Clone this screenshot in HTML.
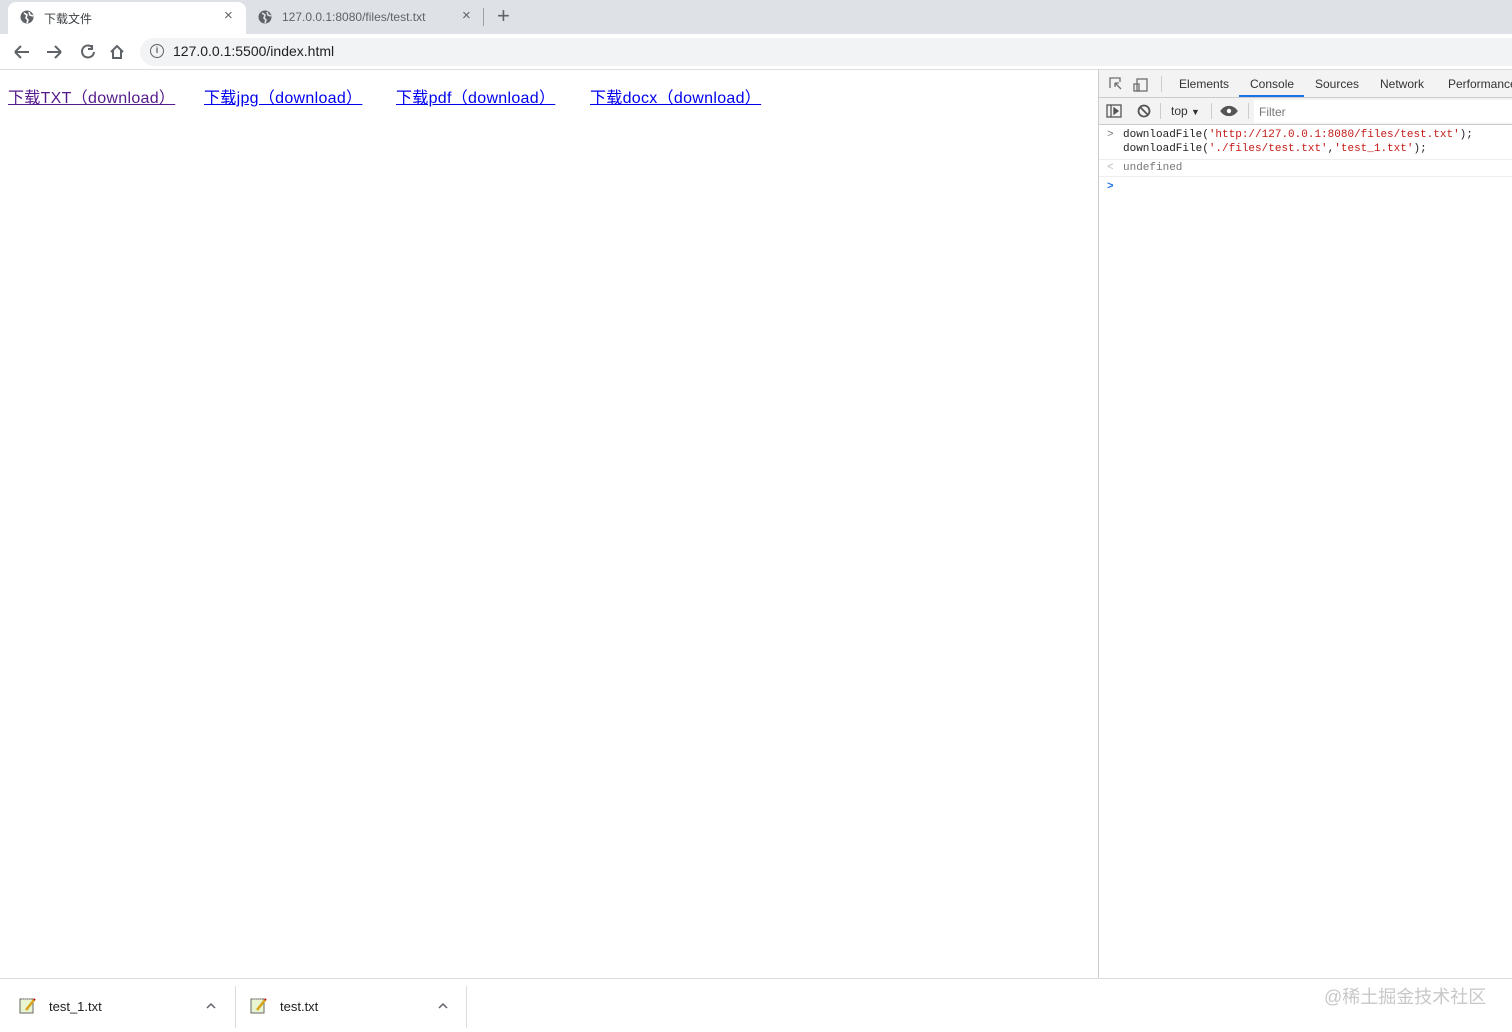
<!DOCTYPE html><html><head><meta charset="utf-8"><style>
*{margin:0;padding:0;box-sizing:border-box}
body{width:1512px;height:1032px;position:relative;overflow:hidden;background:#fff;font-family:"Liberation Sans","Noto Sans CJK SC",sans-serif}
.a{position:absolute}
.mono{font-family:"Liberation Mono",monospace;font-size:11px;line-height:14px}
.lk{font-size:16px;text-decoration:underline;letter-spacing:0.3px;top:84px}
</style></head><body>
<div class="a" style="left:0;top:0;width:1512px;height:34px;background:#dee1e6"></div>
<div class="a" style="left:8px;top:2px;width:238px;height:32px;background:#fff;border-radius:8px 8px 0 0"></div>
<svg class="a" style="left:20px;top:10px" width="14" height="14" viewBox="0 0 14 14"><circle cx="7" cy="7" r="6.5" fill="#5f6368"/><path d="M4 3l3 2-1 3 2 2-1 3M9 2l1 3 3 1" stroke="#fff" stroke-width="1.6" fill="none"/></svg>
<div class="a" style="left:44px;top:10px;font-size:12px;color:#3c4043">下载文件</div>
<div class="a" style="left:224px;top:7px;font-size:15px;color:#5f6368">×</div>
<svg class="a" style="left:258px;top:10px" width="14" height="14" viewBox="0 0 14 14"><circle cx="7" cy="7" r="6.5" fill="#5f6368"/><path d="M4 3l3 2-1 3 2 2-1 3M9 2l1 3 3 1" stroke="#dee1e6" stroke-width="1.6" fill="none"/></svg>
<div class="a" style="left:282px;top:10px;font-size:12px;color:#5f6368">127.0.0.1:8080/files/test.txt</div>
<div class="a" style="left:462px;top:7px;font-size:15px;color:#5f6368">×</div>
<div class="a" style="left:483px;top:8px;width:1px;height:18px;background:#9aa0a6"></div>
<div class="a" style="left:497px;top:3px;font-size:22px;color:#5f6368">+</div>
<svg class="a" style="left:12px;top:42px" width="120" height="20" viewBox="0 0 120 20" fill="none" stroke="#5f6368" stroke-width="2"><path d="M3 10h14M3 10l6-6M3 10l6 6"/><path d="M35 10h14M49 10l-6-6M49 10l-6 6"/><path d="M80 5a6 6 0 1 0 2 5M80 3v4h-4"/><path d="M99 10l6-6 6 6M101 8v8h8V8"/></svg>
<div class="a" style="left:140px;top:38px;width:1372px;height:28px;background:#f1f3f4;border-radius:14px 0 0 14px"></div>
<div class="a" style="left:150px;top:44px;width:14px;height:14px;border:1.6px solid #5f6368;border-radius:50%;font-size:9px;text-align:center;line-height:11px;color:#5f6368;font-weight:bold">i</div>
<div class="a" style="left:173px;top:43px;font-size:14px;color:#202124">127.0.0.1:5500/index.html</div>
<div class="a" style="left:0;top:69px;width:1512px;height:1px;background:#dadce0"></div>
<div class="a lk" style="left:8px;color:#551a8b">下载TXT（download）</div>
<div class="a lk" style="left:204px;color:#0000ee">下载jpg（download）</div>
<div class="a lk" style="left:396px;color:#0000ee">下载pdf（download）</div>
<div class="a lk" style="left:590px;color:#0000ee">下载docx（download）</div>
<div class="a" style="left:1098px;top:70px;width:1px;height:908px;background:#ccc"></div>
<div class="a" style="left:1099px;top:70px;width:413px;height:28px;background:#f3f3f3;border-bottom:1px solid #ccc"></div>
<svg class="a" style="left:1108px;top:76px" width="44" height="16" viewBox="0 0 44 16" fill="none" stroke="#6e6e6e" stroke-width="1.3"><path d="M2 12V2h10v4M7 7l6 6M7 7h4M7 7v4"/><rect x="29" y="3" width="10" height="12"/><rect x="26" y="8" width="5" height="7"/></svg>
<div class="a" style="left:1161px;top:76px;width:1px;height:16px;background:#ccc"></div>
<div class="a" style="left:1179px;top:77px;font-size:12px;color:#333">Elements</div>
<div class="a" style="left:1250px;top:77px;font-size:12px;color:#333">Console</div>
<div class="a" style="left:1239px;top:95px;width:65px;height:2px;background:#1a73e8"></div>
<div class="a" style="left:1315px;top:77px;font-size:12px;color:#333">Sources</div>
<div class="a" style="left:1380px;top:77px;font-size:12px;color:#333">Network</div>
<div class="a" style="left:1448px;top:77px;font-size:12px;color:#333;white-space:nowrap">Performance</div>
<div class="a" style="left:1099px;top:98px;width:413px;height:27px;background:#f3f3f3;border-bottom:1px solid #ccc"></div>
<svg class="a" style="left:1106px;top:103px" width="140" height="16" viewBox="0 0 140 16" fill="none" stroke="#555" stroke-width="1.3"><rect x="1" y="2" width="14" height="12"/><path d="M5 2v12M8 5l4 3-4 3z" fill="#555"/><circle cx="38" cy="8" r="5.5" stroke-width="1.8"/><path d="M34 4l8 8" stroke-width="1.8"/><path d="M115 8c4-6 12-6 16 0c-4 6-12 6-16 0z" fill="#555"/><circle cx="123" cy="8" r="2.2" fill="#fff" stroke="none"/></svg>
<div class="a" style="left:1160px;top:103px;width:1px;height:16px;background:#ccc"></div>
<div class="a" style="left:1171px;top:104px;font-size:12px;color:#333">top <span style="font-size:9px">▼</span></div>
<div class="a" style="left:1211px;top:103px;width:1px;height:16px;background:#ccc"></div>
<div class="a" style="left:1248px;top:103px;width:1px;height:16px;background:#ccc"></div>
<div class="a" style="left:1254px;top:100px;width:258px;height:23px;background:#fff"></div>
<div class="a" style="left:1259px;top:105px;font-size:12px;color:#777">Filter</div>
<div class="a mono" style="left:1107px;top:128px;color:#777">&gt;</div>
<div class="a mono" style="left:1123px;top:128px;color:#222;white-space:pre">downloadFile(<span style="color:#c41a16">'http://127.0.0.1:8080/files/test.txt'</span>);
downloadFile(<span style="color:#c41a16">'./files/test.txt'</span>,<span style="color:#c41a16">'test_1.txt'</span>);</div>
<div class="a" style="left:1099px;top:159px;width:413px;height:1px;background:#eee"></div>
<div class="a mono" style="left:1107px;top:161px;color:#bbb">&lt;</div>
<div class="a mono" style="left:1123px;top:161px;color:#777">undefined</div>
<div class="a" style="left:1099px;top:176px;width:413px;height:1px;background:#eee"></div>
<div class="a mono" style="left:1107px;top:180px;color:#1a73e8;font-weight:bold">&gt;</div>
<div class="a" style="left:0;top:978px;width:1512px;height:1px;background:#dadce0"></div>
<svg class="a" style="left:19px;top:997px" width="18" height="18" viewBox="0 0 18 18"><rect x="1" y="2" width="13" height="14" fill="#e8f5d0" stroke="#666"/><path d="M3 2h9" stroke="#999" stroke-dasharray="1 1"/><path d="M7 13l8-10" stroke="#d7a21a" stroke-width="2.5"/><path d="M15 3l1-1" stroke="#c00" stroke-width="2"/></svg>
<div class="a" style="left:49px;top:999px;font-size:13px;color:#202124">test_1.txt</div>
<svg class="a" style="left:205px;top:1002px" width="12" height="8" viewBox="0 0 12 8"><path d="M2 6l4-4 4 4" stroke="#5f6368" stroke-width="1.5" fill="none"/></svg>
<div class="a" style="left:235px;top:986px;width:1px;height:42px;background:#dadce0"></div>
<svg class="a" style="left:250px;top:997px" width="18" height="18" viewBox="0 0 18 18"><rect x="1" y="2" width="13" height="14" fill="#e8f5d0" stroke="#666"/><path d="M3 2h9" stroke="#999" stroke-dasharray="1 1"/><path d="M7 13l8-10" stroke="#d7a21a" stroke-width="2.5"/><path d="M15 3l1-1" stroke="#c00" stroke-width="2"/></svg>
<div class="a" style="left:280px;top:999px;font-size:13px;color:#202124">test.txt</div>
<svg class="a" style="left:437px;top:1002px" width="12" height="8" viewBox="0 0 12 8"><path d="M2 6l4-4 4 4" stroke="#5f6368" stroke-width="1.5" fill="none"/></svg>
<div class="a" style="left:466px;top:986px;width:1px;height:42px;background:#dadce0"></div>
<div class="a" style="left:1324px;top:983px;font-size:18px;color:#c8c8c8">@稀土掘金技术社区</div>
</body></html>
